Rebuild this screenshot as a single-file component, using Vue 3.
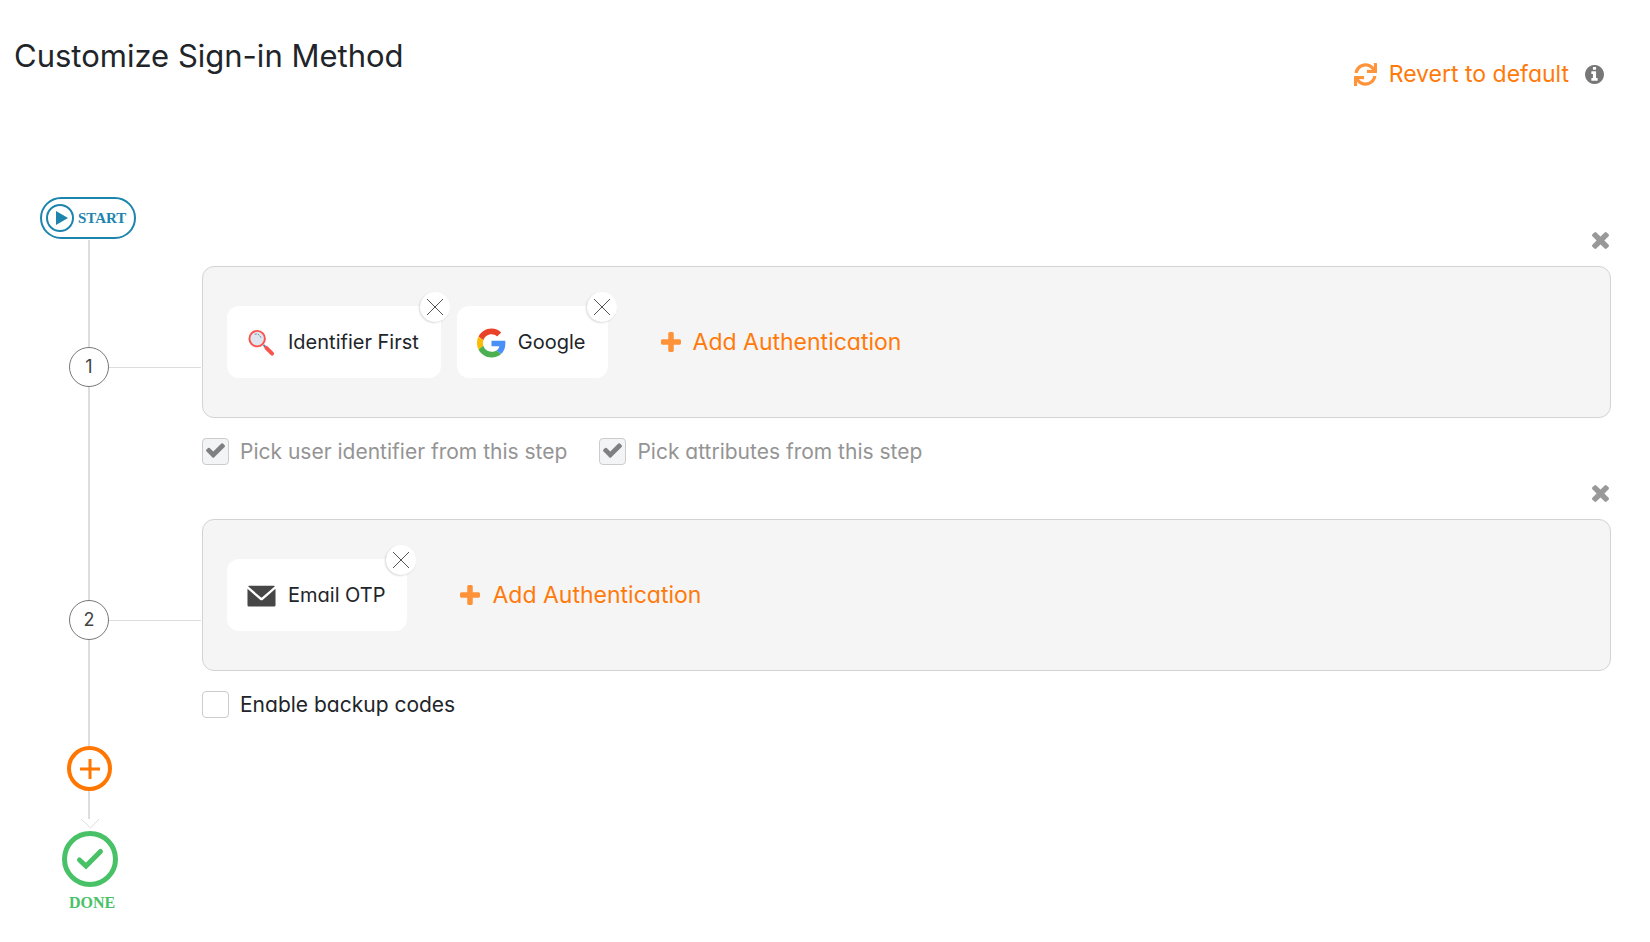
<script setup>
import { reactive } from 'vue'

const icons = {
  plus: {
    box: '192 128 1408 1408',
    path: 'M1600 736v192q0 40-28 68t-68 28h-416v416q0 40-28 68t-68 28h-192q-40 0-68-28t-28-68v-416h-416q-40 0-68-28t-28-68v-192q0-40 28-68t68-28h416v-416q0-40 28-68t68-28h192q40 0 68 28t28 68v416h416q40 0 68 28t28 68z',
  },
  times: {
    box: '302 366 1188 1188',
    path: 'M1490 1322q0 40-28 68l-136 136q-28 28-68 28t-68-28l-294-294-294 294q-28 28-68 28t-68-28l-136-136q-28-28-28-68t28-68l294-294-294-294q-28-28-28-68t28-68l136-136q28-28 68-28t68 28l294 294 294-294q28-28 68-28t68 28l136 136q28 28 28 68t-28 68l-294 294 294 294q28 28 28 68z',
  },
  check: {
    box: '121 334 1550 1188',
    path: 'M1671 566q0 40-28 68l-724 724-136 136q-28 28-68 28t-68-28l-136-136-362-362q-28-28-28-68t28-68l136-136q28-28 68-28t68 28l294 295 656-657q28-28 68-28t68 28l136 136q28 28 28 68z',
  },
  sync: {
    box: '0 0 512 512',
    path: 'M440.65 12.57l4 82.77A247.16 247.16 0 0 0 255.83 8C134.73 8 33.91 94.92 12.29 209.82A12 12 0 0 0 24.09 224h49.05a12 12 0 0 0 11.67-9.26 175.91 175.91 0 0 1 317-56.94l-101.46-4.86a12 12 0 0 0-12.57 12v47.41a12 12 0 0 0 12 12H500a12 12 0 0 0 12-12V12a12 12 0 0 0-12-12h-47.37a12 12 0 0 0-11.98 12.57zM255.83 432a175.61 175.61 0 0 1-146-77.8l101.8 4.87a12 12 0 0 0 12.57-12v-47.4a12 12 0 0 0-12-12H12a12 12 0 0 0-12 12V500a12 12 0 0 0 12 12h47.35a12 12 0 0 0 12-12.6l-4.15-82.57A247.17 247.17 0 0 0 255.83 504c121.11 0 221.93-86.92 243.55-201.82a12 12 0 0 0-11.8-14.18h-49.05a12 12 0 0 0-11.67 9.26A175.86 175.86 0 0 1 255.83 432z',
  },
  info: {
    box: '128 128 1536 1536',
    path: 'M1152 1376v-160q0-14-9-23t-23-9h-96v-512q0-14-9-23t-23-9h-320q-14 0-23 9t-9 23v160q0 14 9 23t23 9h96v320h-96q-14 0-23 9t-9 23v160q0 14 9 23t23 9h448q14 0 23-9t9-23zm-128-896v-160q0-14-9-23t-23-9h-192q-14 0-23 9t-9 23v160q0 14 9 23t23 9h192q14 0 23-9t9-23zm640 416q0 209-103 385.5t-279.5 279.5-385.5 103-385.5-103-279.5-279.5-103-385.5 103-385.5 279.5-279.5 385.5-103 385.5 103 279.5 279.5 103 385.5z',
  },
}

const steps = reactive([
  {
    id: 1,
    methods: [
      { name: 'Identifier First', icon: 'search' },
      { name: 'Google', icon: 'google' },
    ],
    options: [
      { id: 'pick-identifier', label: 'Pick user identifier from this step', checked: true, disabled: true },
      { id: 'pick-attributes', label: 'Pick attributes from this step', checked: true, disabled: true },
    ],
  },
  {
    id: 2,
    methods: [{ name: 'Email OTP', icon: 'mail' }],
    options: [{ id: 'backup-codes', label: 'Enable backup codes', checked: false, disabled: false }],
  },
])
</script>

<template>
  <main class="page">
    <header class="header">
      <h1 class="title">Customize Sign-in Method</h1>
      <div class="actions">
        <button type="button" class="link revert">
          <svg class="sync" :viewBox="icons.sync.box" aria-hidden="true"><path :d="icons.sync.path" /></svg>
          <span>Revert to default</span>
        </button>
        <button type="button" class="info" aria-label="About default sign-in method">
          <svg :viewBox="icons.info.box" aria-hidden="true"><path :d="icons.info.path" /></svg>
        </button>
      </div>
    </header>

    <div class="start">
      <svg viewBox="0 0 28 28" aria-hidden="true">
        <circle cx="14" cy="14" r="13" />
        <path d="M10 7v14l12-7z" />
      </svg>
      <span>START</span>
    </div>

    <section v-for="step in steps" :key="step.id" class="step">
      <div class="rail">
        <div class="line before"></div>
        <div class="marker">
          <span class="node">{{ step.id }}</span>
          <span class="connector"></span>
        </div>
        <div class="line after"></div>
      </div>

      <div class="content">
        <button type="button" class="remove-step" :aria-label="'Remove step ' + step.id">
          <svg :viewBox="icons.times.box" aria-hidden="true"><path :d="icons.times.path" /></svg>
        </button>

        <div class="panel">
          <div v-for="method in step.methods" :key="method.name" class="chip">
            <svg v-if="method.icon === 'search'" class="chip-icon" viewBox="0 0 30 30" aria-hidden="true">
              <path d="M17 17.500l3.500 3.500" stroke="#607d8b" stroke-width="2" />
              <circle cx="10.500" cy="11" r="8" fill="#dfe6ef" stroke="#f9534c" stroke-width="2" />
              <path d="M20 20.500l6 6" stroke="#f9534c" stroke-width="4" stroke-linecap="round" />
              <path d="M8 6.600q4-1.600 6.500 3.400" fill="none" stroke="#6d7d88" stroke-width="1" stroke-dasharray="2 1" />
            </svg>
            <svg v-else-if="method.icon === 'google'" class="chip-icon" viewBox="0 -1 48 48" aria-hidden="true">
              <path fill="#ea4228" d="M24 9.500c3.540 0 6.710 1.220 9.210 3.600l6.850-6.850C35.900 2.380 30.470 0 24 0 14.620 0 6.510 5.380 2.560 13.220l7.980 6.190C12.430 13.720 17.740 9.500 24 9.500z" />
              <path fill="#4a90f8" d="M46.980 24.550c0-1.570-.15-3.090-.38-4.550H24v9.020h12.940c-.58 2.960-2.260 5.480-4.780 7.180l7.730 6c4.510-4.180 7.090-10.360 7.090-17.650z" />
              <path fill="#fbbc05" d="M10.530 28.590c-.48-1.450-.76-2.990-.76-4.590s.27-3.140.76-4.590l-7.980-6.190C.92 16.460 0 20.120 0 24c0 3.880.92 7.540 2.560 10.780l7.970-6.190z" />
              <path fill="#4caf50" d="M24 48c6.480 0 11.930-2.130 15.890-5.810l-7.730-6c-2.150 1.450-4.920 2.300-8.160 2.300-6.260 0-11.570-4.220-13.470-9.910l-7.980 6.190C6.510 42.620 14.620 48 24 48z" />
            </svg>
            <svg v-else class="chip-icon" viewBox="0 0 30 30" aria-hidden="true">
              <path fill="#464646" d="M2 5h26q1.200 0 .6.800L15.700 16.700q-.7.500-1.400 0L1.400 5.800Q.8 5 2 5z" />
              <path fill="#464646" d="M.5 8l13 11.300q1.500 1.200 3 0L29.500 8v17q0 1.500-1.500 1.500H2Q.5 26.500.5 25z" />
            </svg>
            <span>{{ method.name }}</span>
            <button type="button" class="remove-chip" :aria-label="'Remove ' + method.name">
              <svg viewBox="0 0 16 16" aria-hidden="true"><path d="M0 0l16 16M16 0L0 16" /></svg>
            </button>
          </div>
          <button type="button" class="link add-auth">
            <svg class="plus" :viewBox="icons.plus.box" aria-hidden="true"><path :d="icons.plus.path" /></svg>
            <span>Add Authentication</span>
          </button>
        </div>

        <div class="options">
          <label v-for="option in step.options" :key="option.id" class="option" :class="{ muted: option.disabled }" :for="option.id">
            <span class="box">
              <input :id="option.id" v-model="option.checked" type="checkbox" :disabled="option.disabled" />
              <svg v-if="option.checked" :viewBox="icons.check.box" aria-hidden="true"><path :d="icons.check.path" /></svg>
            </span>
            <span>{{ option.label }}</span>
          </label>
        </div>
      </div>
    </section>

    <footer class="finish">
      <button type="button" class="add-step" aria-label="Add step">
        <svg viewBox="0 0 20 20" aria-hidden="true"><path d="M10 0v20M0 10h20" /></svg>
      </button>
      <div class="line tail"></div>
      <svg class="arrow" viewBox="0 0 20 12" aria-hidden="true"><path d="M1 0l9.500 9L19 0" /></svg>
      <svg class="done-icon" viewBox="0 0 56 56" aria-hidden="true">
        <circle cx="28" cy="28" r="25.500" />
        <path d="M17.500 29l6.500 6L38.500 20.500" />
      </svg>
      <span class="done-label">DONE</span>
    </footer>
  </main>
</template>

<style>
body {
  background: #fff;
}
</style>

<style scoped>
.page {
  box-sizing: border-box;
  padding: 36px 39px 24px 0;
  color: #212529;
  font-family: Inter, 'Liberation Sans', sans-serif;
  font-size: 21px;
  font-weight: 400;
  font-feature-settings: 'cv11';
}

button {
  padding: 0;
  border: 0;
  background: none;
  color: inherit;
  font: inherit;
  font-feature-settings: inherit;
  cursor: pointer;
}

svg {
  display: block;
  flex: none;
  fill: currentColor;
}

.header {
  display: flex;
  justify-content: space-between;
  height: 161px;
  padding-left: 14px;
}

.title {
  margin: 0;
  font-size: 31px;
  font-weight: 400;
  line-height: 40px;
}

.actions {
  display: flex;
  align-items: center;
  gap: 16px;
  height: 40px;
  margin: 18px 7px 0 0;
}

.link {
  display: flex;
  align-items: center;
  gap: 12px;
  color: #ff7a0a;
  font-size: 23px;
}

.sync {
  width: 23px;
  height: 23px;
  opacity: 0.8;
}

.info svg {
  width: 19px;
  height: 19px;
  color: #777;
}

.start {
  display: flex;
  align-items: center;
  gap: 4px;
  box-sizing: border-box;
  width: 96px;
  height: 42px;
  margin: 0 0 1px 40px;
  padding-left: 4px;
  border: 2px solid #1d84ae;
  border-radius: 21px;
  color: #1d84ae;
  font: bold 15px 'Liberation Serif', serif;
}

.start svg {
  width: 28px;
  height: 28px;
}

.start circle {
  fill: none;
  stroke: currentColor;
  stroke-width: 2;
}

.step {
  display: grid;
  grid-template-columns: 202px 1fr;
}

.rail {
  display: flex;
  flex-direction: column;
}

.line {
  width: 2px;
  margin-left: 88px;
  background: #ddd;
}

.before {
  height: 107px;
}

.after {
  flex: 1;
}

.marker {
  display: flex;
  align-items: center;
  padding: 0 1px 0 69px;
}

.node {
  box-sizing: border-box;
  width: 40px;
  height: 40px;
  border: 1px solid #777;
  border-radius: 50%;
  color: #444;
  font-size: 18px;
  line-height: 38px;
  text-align: center;
}

.connector {
  flex: 1;
  height: 1px;
  background: #ddd;
}

.content {
  display: flex;
  flex-direction: column;
}

.remove-step {
  align-self: flex-end;
  margin: -8px 2px 17px 0;
  color: #999;
}

.remove-step svg {
  width: 17px;
  height: 17px;
}

.panel {
  display: flex;
  align-items: center;
  gap: 16px;
  box-sizing: border-box;
  min-height: 152px;
  padding: 0 24px;
  border: 1px solid #d3d3d3;
  border-radius: 12px;
  background: #f5f5f5;
}

.chip {
  position: relative;
  display: flex;
  align-items: center;
  gap: 12px;
  height: 72px;
  padding: 0 22px 0 20px;
  border-radius: 12px;
  background: #fff;
  font-size: 20px;
}

.chip-icon {
  width: 29px;
  height: 29px;
  overflow: visible;
}

.remove-chip {
  position: absolute;
  top: -14px;
  right: -9px;
  display: flex;
  align-items: center;
  justify-content: center;
  width: 30px;
  height: 30px;
  border-radius: 50%;
  background: #fff;
  box-shadow: -1px 1px 2px rgba(0, 0, 0, 0.15);
}

.remove-chip svg {
  width: 16px;
  height: 16px;
  stroke: #555;
}

.add-auth {
  margin-left: 37px;
}

.plus {
  width: 20px;
  height: 20px;
  opacity: 0.8;
}

.options {
  display: flex;
  gap: 32px;
  padding: 20px 0 28px;
}

.option {
  display: flex;
  align-items: center;
  gap: 11px;
  font-size: 21px;
  line-height: 27px;
}

.muted {
  color: #949494;
}

.box {
  position: relative;
}

.box input {
  display: block;
  box-sizing: border-box;
  width: 27px;
  height: 27px;
  margin: 0;
  border: 1px solid #ccc;
  border-radius: 4px;
  background: #fff;
  appearance: none;
}

.box input:disabled {
  background: #f3f4f6;
}

.box svg {
  position: absolute;
  top: 5px;
  left: 4px;
  width: 19px;
  height: 15px;
  color: #808080;
  pointer-events: none;
}

.finish {
  display: flex;
  flex-direction: column;
  align-items: flex-start;
}

.add-step {
  display: flex;
  align-items: center;
  justify-content: center;
  box-sizing: border-box;
  width: 45px;
  height: 45px;
  margin-left: 67px;
  border: 4px solid #ff7600;
  border-radius: 50%;
  color: #ff7600;
}

.add-step svg {
  width: 20px;
  height: 20px;
  stroke: currentColor;
  stroke-width: 3;
}

.tail {
  height: 28px;
}

.arrow {
  width: 20px;
  height: 12px;
  margin-left: 80px;
  fill: none;
  stroke: #ddd;
}

.done-icon {
  width: 56px;
  height: 56px;
  margin-left: 62px;
  fill: none;
  stroke: #49c167;
  stroke-width: 5;
  stroke-linecap: round;
}

.done-label {
  margin: 7px 0 0 69px;
  color: #49c167;
  font: bold 16px 'Liberation Serif', serif;
}
</style>
